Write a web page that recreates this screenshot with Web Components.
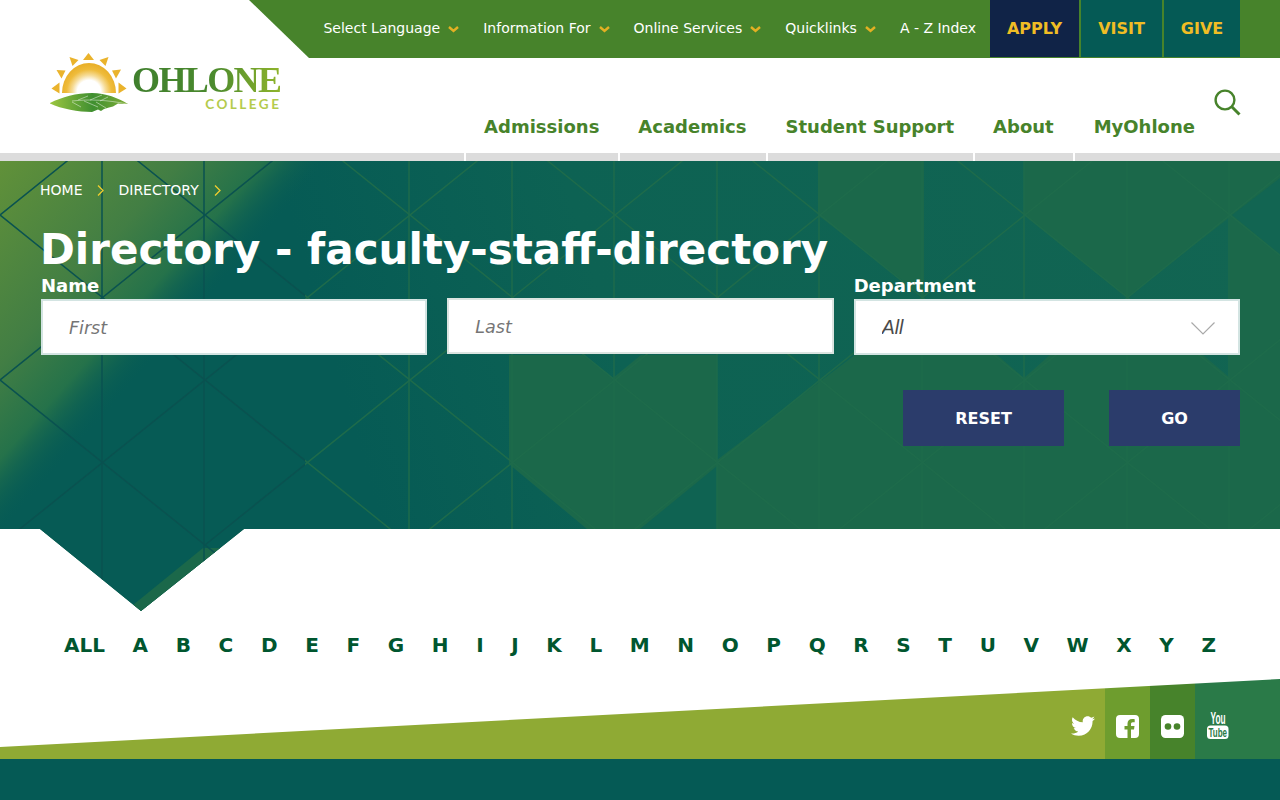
<!DOCTYPE html>
<html lang="en">
<head>
<meta charset="utf-8">
<title>Directory - faculty-staff-directory</title>
<style>
    html, body { margin: 0; padding: 0; background: #fff; }
    body { font-family: "DejaVu Sans", sans-serif; overflow: hidden; height: 800px; }
</style>
</head>
<body>
<site-header></site-header>
<directory-hero></directory-hero>
<letter-index></letter-index>
<social-band></social-band>
<site-footer></site-footer>

<script>
    const chevron = `<svg width="11" height="7" viewBox="0 0 11 7" fill="none" stroke="#e3b023" stroke-width="2.4"><path d="M1 1l4.5 4 4.5-4"/></svg>`;

    class TopLink extends HTMLElement {
        connectedCallback() {
            this.attachShadow({ mode: 'open' }).innerHTML = `
                <style>
                    :host { display: flex; align-items: center; gap: 8px; color: #fff; font-size: 14px; }
                    svg { margin-top: 3px; }
                </style>
                <slot></slot>
                ${this.hasAttribute('menu') ? chevron : ''}
            `;
        }
    }
    customElements.define('top-link', TopLink);

    class CtaLink extends HTMLElement {
        connectedCallback() {
            this.attachShadow({ mode: 'open' }).innerHTML = `
                <style>
                    :host {
                        display: flex; align-items: center; justify-content: center;
                        height: 57px; font-size: 16px; font-weight: 700; color: #f0bd24;
                        background: var(--bg, #055a55);
                    }
                </style>
                <slot></slot>
            `;
        }
    }
    customElements.define('cta-link', CtaLink);

    class SiteLogo extends HTMLElement {
        connectedCallback() {
            this.attachShadow({ mode: 'open' }).innerHTML = `
                <style>
                    :host { display: flex; width: 232px; height: 60px; align-items: flex-start; }
                    svg { flex: none; display: block; }
                    .words { display: flex; flex-direction: column; align-items: flex-end; margin-left: 3px; padding-top: 12px; }
                    .name {
                        font: 700 36px/30px "Liberation Serif", serif;
                        letter-spacing: -1.6px;
                        background: linear-gradient(90deg, #3f7f2d 0%, #4b8a2e 55%, #8fb42c 100%);
                        -webkit-background-clip: text; background-clip: text; color: transparent;
                    }
                    .sub { font: 700 13.5px/14px "Lato", sans-serif; letter-spacing: 2.5px; color: #b4cb4c; margin: 2px -1px 0 0; }
                </style>
                <svg width="79" height="60" viewBox="50 53 79 60">
                    <defs>
                        <radialGradient id="sun" gradientUnits="userSpaceOnUse" cx="89" cy="92" r="28">
                            <stop offset="0.42" stop-color="#fff"/>
                            <stop offset="0.6" stop-color="#f6dc98"/>
                            <stop offset="0.8" stop-color="#efbc3c"/>
                            <stop offset="1" stop-color="#e9b02a"/>
                        </radialGradient>
                        <linearGradient id="leaf" x1="0" x2="1" y1="0" y2="0">
                            <stop offset="0" stop-color="#9cc640"/>
                            <stop offset="0.55" stop-color="#3f8f30"/>
                            <stop offset="1" stop-color="#7fae38"/>
                        </linearGradient>
                    </defs>
                    <path d="M62 93a27 30 0 0 1 54 0z" fill="url(#sun)"/>
                    <g fill="#eab32c">
                        <path d="M88.500 53l5.500 7h-11z"/>
                        <path d="M69.500 57l9 3-6 6z"/>
                        <path d="M108.500 57l-9 3 6 6z"/>
                        <path d="M56.500 70l9 .500-4 8z"/>
                        <path d="M121 69.500l-9 1 4 8z"/>
                        <path d="M51.500 88.500l8-6v11z"/>
                        <path d="M126.500 88.500l-8-6v11z"/>
                    </g>
                    <path d="M50 103c12-6 26-10 42-10 14 0 26 5 36 11-3 0-8 0-10-.500l-5 3-4 1-5 1.500-3 2-3-1.500-6 2.500c-14 0-30-3-42-8.500z" fill="url(#leaf)"/>
                    <g stroke="#fff" stroke-width=".6" stroke-opacity=".75" fill="none">
                        <path d="M72 101c18-2 36-1 55 3"/>
                        <path d="M78 100l10-4 M90 100l12-5 M100 101l8-4 M84 101l14 6 M96 102l10 6 M72 102l9 5"/>
                    </g>
                </svg>
                <div class="words">
                    <span class="name">OHLONE</span>
                    <span class="sub">COLLEGE</span>
                </div>
            `;
        }
    }
    customElements.define('site-logo', SiteLogo);

    class NavItem extends HTMLElement {
        connectedCallback() {
            this.attachShadow({ mode: 'open' }).innerHTML = `
                <style>
                    :host {
                        display: block; position: relative;
                        padding: 0 19px 14px 20px;
                        font-size: 18px; line-height: 24px; font-weight: 700; color: #47832b;
                    }
                    :host(:last-child) { padding-left: 21px; }
                    :host::after {
                        content: ""; position: absolute; left: 0; bottom: -8px;
                        width: 2px; height: 8px; background: #fff;
                    }
                </style>
                <slot></slot>
            `;
        }
    }
    customElements.define('nav-item', NavItem);

    class SiteHeader extends HTMLElement {
        connectedCallback() {
            this.attachShadow({ mode: 'open' }).innerHTML = `
                <style>
                    :host { display: block; }
                    .top {
                        height: 58px; margin-left: 249px; padding-right: 40px; box-sizing: border-box;
                        background: #47832b;
                        clip-path: polygon(0 0, 100% 0, 100% 100%, 60px 100%);
                        display: flex; justify-content: flex-end; align-items: flex-start;
                    }
                    .links { display: flex; align-items: center; gap: 24px; height: 56px; margin-right: 14px; }
                    .cta { display: flex; gap: 2px; }
                    .main {
                        height: 95px; border-bottom: 8px solid #dcdcdc;
                        display: flex; align-items: flex-end; position: relative;
                    }
                    site-logo { align-self: flex-start; margin: -5px 0 0 50px; }
                    nav { display: flex; margin-left: auto; margin-right: 66px; }
                    .search { position: absolute; left: 1214px; top: 31px; display: block; }
                </style>
                <div class="top">
                    <div class="links">
                        <top-link menu>Select Language</top-link>
                        <top-link menu>Information For</top-link>
                        <top-link menu>Online Services</top-link>
                        <top-link menu>Quicklinks</top-link>
                        <top-link>A - Z Index</top-link>
                    </div>
                    <div class="cta">
                        <cta-link style="--bg:#102347;width:89px">APPLY</cta-link>
                        <cta-link style="width:81px">VISIT</cta-link>
                        <cta-link style="width:76px">GIVE</cta-link>
                    </div>
                </div>
                <div class="main">
                    <site-logo></site-logo>
                    <nav>
                        <nav-item>Admissions</nav-item>
                        <nav-item>Academics</nav-item>
                        <nav-item>Student Support</nav-item>
                        <nav-item>About</nav-item>
                        <nav-item>MyOhlone</nav-item>
                    </nav>
                    <svg class="search" width="27" height="27" viewBox="0 0 27 27" fill="none" stroke="#47832b">
                        <circle cx="11" cy="11" r="9.400" stroke-width="2.400"/>
                        <path d="M17.800 17.800l7.700 7.700" stroke-width="3"/>
                    </svg>
                </div>
            `;
        }
    }
    customElements.define('site-header', SiteHeader);

    class HeroBackground extends HTMLElement {
        connectedCallback() {
            let diagonals = '';
            for (let k = -3; k < 9; k++) {
                const x = 205 * k;
                diagonals += `<path d="M${x - 410} -115L${x + 1025} 1040M${x - 410} 545L${x + 1025} -610"/>`;
            }
            let darkBars = '', lightBars = '';
            for (let i = 1; i <= 12; i++) {
                const x = Math.round(102.5 * i) - 1;
                if (i <= 3) darkBars += `<path d="M${x} 161V620"/>`;
                else lightBars += `<path d="M${x} 161V620"/>`;
            }
            this.attachShadow({ mode: 'open' }).innerHTML = `
                <style>
                    :host { display: block; position: absolute; left: 0; top: 0; width: 1280px; height: 450px; }
                    svg {
                        display: block;
                        clip-path: polygon(0 0, 1280px 0, 1280px 368px, 244px 368px, 141px 450px, 40px 368px, 0 368px);
                    }
                </style>
                <svg width="1280" height="450" viewBox="0 161 1280 450">
                    <defs>
                        <linearGradient id="mid" gradientUnits="userSpaceOnUse" x1="350" y1="420" x2="1230" y2="160">
                            <stop offset="0" stop-color="#065b55"/>
                            <stop offset="0.3" stop-color="#0d6253"/>
                            <stop offset="1" stop-color="#126552"/>
                        </linearGradient>
                        <linearGradient id="glow" gradientUnits="userSpaceOnUse" x1="0" y1="161" x2="185" y2="325">
                            <stop offset="0" stop-color="#619139"/>
                            <stop offset="0.55" stop-color="#427e44"/>
                            <stop offset="0.8" stop-color="#25724a"/>
                            <stop offset="1" stop-color="#075b54" stop-opacity="0"/>
                        </linearGradient>
                        <clipPath id="left"><rect x="0" y="161" width="305" height="460"/></clipPath>
                        <clipPath id="right"><rect x="305" y="161" width="975" height="460"/></clipPath>
                    </defs>
                    <rect x="0" y="161" width="1280" height="460" fill="#1b684a"/>
                    <path fill="url(#mid)" d="M0 161H818V215L924 297V161H1024V215L1127 297L1230 217V378L1203 355H1050L1024 378L997 355H855L717 460V355H641L613 378L583 355H509V464L587 529H509V620H0Z"/>
                    <path fill="#0f6352" d="M717 466L640 529H717Z"/>
                    <path fill="#126552" d="M1232 215L1280 178V255Z"/>
                    <rect x="0" y="161" width="400" height="460" fill="url(#glow)"/>
                    <path fill="#1b684a" d="M133 605L203 548H225L141 616Z"/>
                    <g clip-path="url(#left)" fill="none" stroke="#0a5250" stroke-width="1.500">${diagonals}${darkBars}</g>
                    <g clip-path="url(#right)" fill="none" stroke="#1e6b4b" stroke-width="1.500">${diagonals}${lightBars}</g>
                </svg>
            `;
        }
    }
    customElements.define('hero-background', HeroBackground);

    class BreadCrumbs extends HTMLElement {
        connectedCallback() {
            const arrow = `<svg width="7" height="11" viewBox="0 0 7 11" fill="none" stroke="#f0cd2e" stroke-width="1.300"><path d="M1 .500l5 5-5 5"/></svg>`;
            this.attachShadow({ mode: 'open' }).innerHTML = `
                <style>
                    :host { display: flex; align-items: center; height: 18px; color: #fff; font-size: 14px; }
                    svg { margin: 0 14px 0 15px; }
                </style>
                <span>HOME</span>${arrow}<span>DIRECTORY</span>${arrow}
            `;
        }
    }
    customElements.define('bread-crumbs', BreadCrumbs);

    class DirectoryForm extends HTMLElement {
        connectedCallback() {
            this.attachShadow({ mode: 'open' }).innerHTML = `
                <style>
                    :host { display: block; }
                    .grid {
                        display: grid; grid-template-columns: repeat(3, 1fr); column-gap: 20px;
                        grid-template-rows: 20px 56px; row-gap: 3px;
                    }
                    label { font-size: 18px; line-height: 20px; font-weight: 700; color: #fff; }
                    input, select {
                        display: block; width: 100%; height: 56px; box-sizing: border-box; margin: 0;
                        padding: 2px 26px 0; border: 2px solid #d3e4e2; border-radius: 0; background: #fff;
                        font: italic 17.500px "DejaVu Sans", sans-serif; color: #4a4a4a; outline: 0;
                    }
                    input::placeholder { color: #757575; opacity: 1; }
                    .last { margin-top: -1px; border-color: #dbe4e0; }
                    .select { position: relative; }
                    select { appearance: none; -webkit-appearance: none; font-family: "Liberation Sans", sans-serif; font-size: 19.500px; padding-top: 0; }
                    .select svg { position: absolute; right: 25px; top: 23px; }
                    .buttons { display: flex; justify-content: flex-end; gap: 45px; margin-top: 35px; }
                    button {
                        height: 56px; border: 0; background: #2b3c6b; color: #fff; padding: 0;
                        font: 700 16px "DejaVu Sans", sans-serif;
                    }
                </style>
                <div class="grid">
                    <label for="first">Name</label>
                    <span></span>
                    <label for="dept">Department</label>
                    <input id="first" placeholder="First">
                    <input class="last" placeholder="Last">
                    <div class="select">
                        <select id="dept"><option>All</option></select>
                        <svg width="24" height="13" viewBox="0 0 24 13" fill="none" stroke="#a9a9a9" stroke-width="1.200"><path d="M.500 .500L12 12 23.500 .500"/></svg>
                    </div>
                </div>
                <div class="buttons">
                    <button style="width:161px">RESET</button>
                    <button style="width:131px">GO</button>
                </div>
            `;
        }
    }
    customElements.define('directory-form', DirectoryForm);

    class DirectoryHero extends HTMLElement {
        connectedCallback() {
            this.attachShadow({ mode: 'open' }).innerHTML = `
                <style>
                    :host { display: block; position: relative; height: 368px; box-sizing: border-box; }
                    .content { position: relative; padding: 20px 40px 0 41px; }
                    bread-crumbs { margin-left: -1px; }
                    h1 {
                        margin: 26px 0 1px -1px; font-size: 42px; line-height: 50px;
                        font-weight: 700; color: #fff;
                    }
                </style>
                <hero-background></hero-background>
                <div class="content">
                    <bread-crumbs></bread-crumbs>
                    <h1>Directory - faculty-staff-directory</h1>
                    <directory-form></directory-form>
                </div>
            `;
        }
    }
    customElements.define('directory-hero', DirectoryHero);

    class LetterIndex extends HTMLElement {
        connectedCallback() {
            const letters = ['ALL', ...'ABCDEFGHIJKLMNOPQRSTUVWXYZ'];
            this.attachShadow({ mode: 'open' }).innerHTML = `
                <style>
                    :host { display: block; height: 150px; box-sizing: border-box; padding: 104px 64px 0; }
                    .row { display: flex; justify-content: space-between; font-size: 20px; line-height: 24px; font-weight: 700; color: #00562f; }
                </style>
                <div class="row">${letters.map(l => `<span>${l}</span>`).join('')}</div>
            `;
        }
    }
    customElements.define('letter-index', LetterIndex);

    class SocialBand extends HTMLElement {
        connectedCallback() {
            this.attachShadow({ mode: 'open' }).innerHTML = `
                <style>
                    :host {
                        display: flex; height: 80px;
                        clip-path: polygon(0 68px, 100% 0, 100% 100%, 0 100%);
                    }
                    .fill { flex: 1; background: #8faa34; }
                    .cell { width: 45px; display: flex; justify-content: center; align-items: center; padding-top: 14px; box-sizing: border-box; }
                    .yt { width: 85px; background: #2a7a48; justify-content: flex-start; padding-left: 12px; }
                    svg { display: block; overflow: visible; }
                </style>
                <div class="fill"></div>
                <div class="cell" style="background:#8faa34">
                    <svg width="24" height="24" viewBox="0 0 512 512" fill="#fff"><path d="M459.37 151.716c.325 4.548.325 9.097.325 13.645 0 138.72-105.583 298.558-298.558 298.558-59.452 0-114.68-17.219-161.137-47.106 8.447.974 16.568 1.299 25.34 1.299 49.055 0 94.213-16.568 130.274-44.832-46.132-.975-84.792-31.188-98.112-72.772 6.498.974 12.995 1.624 19.818 1.624 9.421 0 18.843-1.3 27.614-3.573-48.081-9.747-84.143-51.98-84.143-102.985v-1.299c13.969 7.797 30.214 12.67 47.431 13.319-28.264-18.843-46.781-51.005-46.781-87.391 0-19.492 5.197-37.36 14.294-52.954 51.655 63.675 129.3 105.258 216.365 109.807-1.624-7.797-2.599-15.918-2.599-24.04 0-57.828 46.782-104.934 104.934-104.934 30.213 0 57.502 12.67 76.67 33.137 23.715-4.548 46.456-13.32 66.599-25.34-7.798 24.366-24.366 44.833-46.132 57.827 21.117-2.273 41.584-8.122 60.426-16.243-14.292 20.791-32.161 39.308-52.628 54.253z"/></svg>
                </div>
                <div class="cell" style="background:#6e9d2e">
                    <svg width="23" height="23" viewBox="0 0 23 23"><path fill="#fff" fill-rule="evenodd" d="M4 0h15a4 4 0 0 1 4 4v15a4 4 0 0 1-4 4h-4v-8.500h3l.5-3.500H15V9c0-1 .5-1.700 1.800-1.700h1.900V4.200c-.5-.1-1.500-.2-2.600-.2-2.800 0-4.600 1.700-4.600 4.700V11H8.500v3.500h3V23H4a4 4 0 0 1-4-4V4a4 4 0 0 1 4-4z"/></svg>
                </div>
                <div class="cell" style="background:#47832b">
                    <svg width="23" height="23" viewBox="0 0 23 23"><rect width="23" height="23" rx="4.500" fill="#fff"/><circle cx="7" cy="11.500" r="3.300" fill="#47832b"/><circle cx="16" cy="11.500" r="3.300" fill="#47832b"/></svg>
                </div>
                <div class="cell yt">
                    <svg width="22" height="26" viewBox="0 0 22 26" font-family="Liberation Sans, sans-serif" font-weight="700">
                        <text x="3.500" y="11" font-size="16" fill="#fff" textLength="15" lengthAdjust="spacingAndGlyphs">You</text>
                        <rect x="0" y="12.500" width="21.500" height="13.500" rx="3.500" fill="#fff"/>
                        <text x="1.500" y="23.500" font-size="13" fill="#2a7a48" textLength="18.500" lengthAdjust="spacingAndGlyphs">Tube</text>
                    </svg>
                </div>
            `;
        }
    }
    customElements.define('social-band', SocialBand);

    class SiteFooter extends HTMLElement {
        connectedCallback() {
            this.attachShadow({ mode: 'open' }).innerHTML = `
                <style>
                    :host { display: block; height: 41px; background: #055a55; }
                </style>
                <slot></slot>
            `;
        }
    }
    customElements.define('site-footer', SiteFooter);
</script>
</body>
</html>
